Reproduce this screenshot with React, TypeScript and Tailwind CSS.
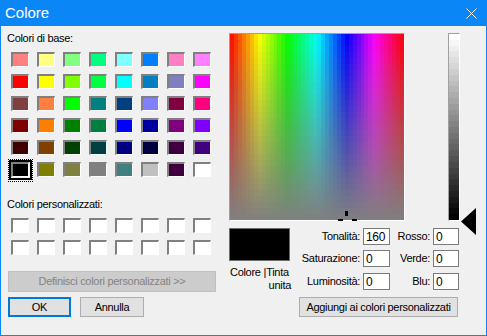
import React from "react";

const BASE: string[] = [
  "#FF8080", "#FFFF80", "#80FF80", "#00FF80", "#80FFFF", "#0080FF", "#FF80C0", "#FF80FF",
  "#FF0000", "#FFFF00", "#80FF00", "#00FF40", "#00FFFF", "#0080C0", "#8080C0", "#FF00FF",
  "#804040", "#FF8040", "#00FF00", "#008080", "#004080", "#8080FF", "#800040", "#FF0080",
  "#800000", "#FF8000", "#008000", "#008040", "#0000FF", "#0000A0", "#800080", "#8000FF",
  "#400000", "#804000", "#004000", "#004040", "#000080", "#000040", "#400040", "#400080",
  "#000000", "#808000", "#808040", "#808080", "#408080", "#C0C0C0", "#400040", "#FFFFFF",
];

function Swatch({ color, selected }: { color: string; selected?: boolean }) {
  return (
    <div className="relative w-[18px] h-[15px]">
      <div
        className="w-full h-full border-t-2 border-l-2 border-r border-b border-t-[#808080] border-l-[#808080] border-r-white border-b-white"
        style={{ backgroundColor: color }}
      />
      {selected && (
        <>
          <div className="absolute -left-[2px] -top-[2px] -right-[3px] -bottom-[3px] border-2 border-black" />
          <div className="absolute -left-[3px] -top-[3px] -right-[4px] -bottom-[5px] border border-dotted border-black" />
        </>
      )}
    </div>
  );
}

function Spectrum() {
  const W = 174;
  const H = 186;
  const cols = 44;
  const rows = 31;
  const rects: React.ReactElement[] = [];
  for (let i = 0; i < cols; i++) {
    for (let j = 0; j < rows; j++) {
      const hue = ((i + 0.5) / cols) * 360;
      const sat = 100 * (1 - (j + 0.5) / rows);
      rects.push(
        <rect
          key={i + "-" + j}
          x={(i * W) / cols}
          y={(j * H) / rows}
          width={W / cols + 0.6}
          height={H / rows + 0.6}
          fill={`hsl(${hue.toFixed(1)}, ${sat.toFixed(1)}%, 50%)`}
        />
      );
    }
  }
  return (
    <svg width={W} height={H} viewBox={`0 0 ${W} ${H}`} shapeRendering="crispEdges" className="block">
      {rects}
    </svg>
  );
}

function LumBar() {
  const W = 10;
  const H = 186;
  const rows = 32;
  const rects: React.ReactElement[] = [];
  for (let j = 0; j < rows; j++) {
    const v = Math.round(255 * (1 - j / (rows - 1)));
    rects.push(
      <rect
        key={j}
        x={0}
        y={(j * H) / rows}
        width={W}
        height={H / rows + 0.6}
        fill={`rgb(${v},${v},${v})`}
      />
    );
  }
  return (
    <svg width={W} height={H} viewBox={`0 0 ${W} ${H}`} shapeRendering="crispEdges" className="block">
      {rects}
    </svg>
  );
}

function Field({ value, w }: { value: string; w: string }) {
  return (
    <div className={`${w} h-[17px] ml-[3px] bg-white border border-[#7a7a7a] flex items-center pl-[2px] text-[12px] leading-none`}>
      {value}
    </div>
  );
}

export default function App() {
  return (
    <div className="w-[487px] h-[336px] bg-[#f0f0f0] border-x border-b border-[#0a86f7] flex flex-col overflow-hidden font-['Liberation_Sans',Arial,sans-serif] text-black text-[11px] leading-[13px] tracking-[-0.3px]">
      {/* title bar */}
      <div className="h-[26px] shrink-0 bg-[#0a86f7] flex items-center justify-between pl-[4px] pr-[9px]">
        <span className="text-white text-[15px] leading-[18px] tracking-normal">Colore</span>
        <svg width="11" height="11" viewBox="0 0 11 11" className="block">
          <path d="M0.5 0.5 L10.5 10.5 M10.5 0.5 L0.5 10.5" stroke="white" strokeWidth="1" fill="none" />
        </svg>
      </div>

      {/* body */}
      <div className="flex flex-row flex-1">
        {/* left column */}
        <div className="w-[228px] shrink-0 flex flex-col">
          <div className="ml-[6px] mt-[6px]">Colori di base:</div>
          <div className="ml-[10px] mt-[7px] grid grid-cols-[repeat(8,18px)] gap-x-[8px] gap-y-[7px]">
            {BASE.map((c, i) => (
              <Swatch key={i} color={c} selected={i === 40} />
            ))}
          </div>
          <div className="ml-[6px] mt-[21px]">Colori personalizzati:</div>
          <div className="ml-[10px] mt-[7px] grid grid-cols-[repeat(8,18px)] gap-x-[8px] gap-y-[7px]">
            {Array.from({ length: 16 }).map((_, i) => (
              <Swatch key={i} color="#FFFFFF" />
            ))}
          </div>
          <div className="ml-[7px] mt-[16px] w-[208px] h-[21px] bg-[#cccccc] border border-[#bfbfbf] flex items-center justify-center text-[#838383]">
            Definisci colori personalizzati &gt;&gt;
          </div>
          <div className="ml-[7px] mt-[5px] flex flex-row">
            <div className="w-[63px] h-[20px] bg-[#e1e1e1] border-2 border-[#0078d7] flex items-center justify-center">
              OK
            </div>
            <div className="ml-[9px] w-[64px] h-[20px] bg-[#e1e1e1] border border-[#adadad] flex items-center justify-center">
              Annulla
            </div>
          </div>
        </div>

        {/* right column */}
        <div className="flex flex-col">
          <div className="mt-[7px] flex flex-row">
            <div className="relative w-[176px] h-[188px] border-t border-l border-t-[#a0a0a0] border-l-[#a0a0a0] border-r border-b border-r-white border-b-white">
              <Spectrum />
              {/* crosshair */}
              <div className="absolute left-[115px] top-[177px] w-[3px] h-[5px] bg-black" />
              <div className="absolute left-[108px] top-[185px] w-[5px] h-[2px] bg-black" />
              <div className="absolute left-[122px] top-[185px] w-[5px] h-[2px] bg-black" />
            </div>
            <div className="relative ml-[43px] w-[12px] h-[188px] border-t border-l border-t-[#a0a0a0] border-l-[#a0a0a0] border-r border-b border-r-white border-b-white">
              <LumBar />
              <svg width="15" height="27" viewBox="0 0 15 27" className="absolute left-[12px] top-[174px] block">
                <polygon points="0,13.5 15,0 15,27" fill="black" />
              </svg>
            </div>
          </div>

          <div className="mt-[7px] flex flex-row">
            {/* preview */}
            <div className="w-[61px] flex flex-col">
              <div className="w-[61px] h-[33px] bg-black border border-[#6d6d6d]" />
              <div className="mt-[5px] flex flex-row">
                <div className="ml-[1px]">Colore</div>
                <div className="ml-[3px] flex flex-col">
                  <span>|Tinta</span>
                  <span className="ml-[5px]">unita</span>
                </div>
              </div>
            </div>
            {/* fields */}
            <div className="flex flex-col">
              <div className="flex flex-row items-center h-[17px]">
                <div className="w-[70px] text-right">Tonalità:</div>
                <Field value="160" w="w-[27px]" />
                <div className="w-[40px] text-right">Rosso:</div>
                <Field value="0" w="w-[26px]" />
              </div>
              <div className="mt-[5px] flex flex-row items-center h-[17px]">
                <div className="w-[70px] text-right">Saturazione:</div>
                <Field value="0" w="w-[27px]" />
                <div className="w-[40px] text-right">Verde:</div>
                <Field value="0" w="w-[26px]" />
              </div>
              <div className="mt-[6px] flex flex-row items-center h-[17px]">
                <div className="w-[70px] text-right">Luminosità:</div>
                <Field value="0" w="w-[27px]" />
                <div className="w-[40px] text-right">Blu:</div>
                <Field value="0" w="w-[26px]" />
              </div>
              <div className="ml-[9px] mt-[7px] w-[159px] h-[20px] bg-[#e1e1e1] border border-[#adadad] flex items-center justify-center">
                Aggiungi ai colori personalizzati
              </div>
            </div>
          </div>
        </div>
      </div>
    </div>
  );
}
